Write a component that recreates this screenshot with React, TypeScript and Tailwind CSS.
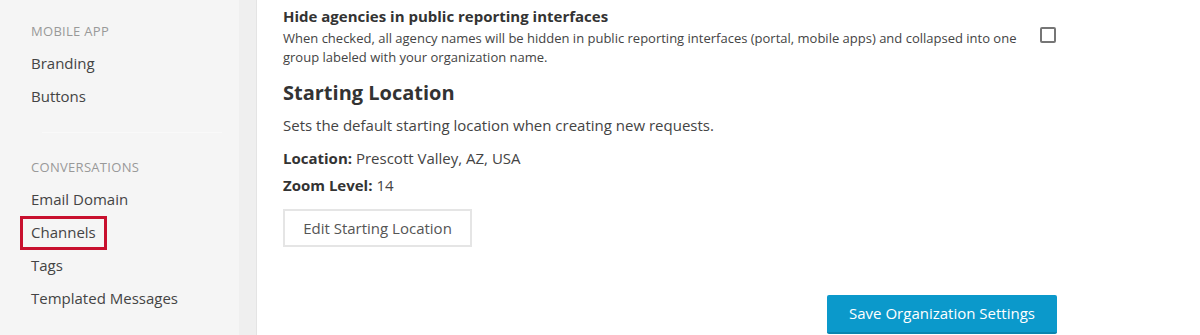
export default function App() {
  const font = { fontFamily: '"Open Sans", "Noto Sans", sans-serif' }

  return (
    <div className="flex h-[335px] w-[1200px] overflow-hidden bg-white text-[#444]" style={font}>
      <Sidebar />
      <div className="w-[18px] shrink-0 border-r border-[#e4e4e4] bg-[#efefef]" />
      <main className="flex-1 pl-[26px]">
        <div className="w-[774px]">
          <div className="flex items-start justify-between pt-[6px]">
            <div className="w-[740px]">
              <h3 className="text-[15px] font-bold leading-[20px] text-[#333]">
                Hide agencies in public reporting interfaces
              </h3>
              <p className="mt-[3px] text-[13px] leading-[19px] text-[#444]">
                When checked, all agency names will be hidden in public reporting interfaces (portal, mobile apps) and collapsed into one group labeled with your organization name.
              </p>
            </div>
            <span className="mr-px mt-[21px] block h-[16px] w-[16px] rounded-[2px] border-2 border-[#767676] bg-white" />
          </div>

          <h2 className="mt-[12px] text-[20px] font-bold leading-[28px] text-[#333]">Starting Location</h2>
          <p className="mt-[8px] text-[15px] leading-[20px]">Sets the default starting location when creating new requests.</p>
          <p className="mt-[13px] text-[15px] leading-[20px]">
            <span className="font-bold text-[#333]">Location:</span> Prescott Valley, AZ, USA
          </p>
          <p className="mt-[7px] text-[15px] leading-[20px]">
            <span className="font-bold text-[#333]">Zoom Level:</span> 14
          </p>
          <button className="mt-[14px] h-[38px] w-[189px] border-2 border-[#e5e5e5] bg-white text-[15px] text-[#555]">
            Edit Starting Location
          </button>

          <div className="mt-[48px] flex justify-end">
            <button className="h-[39px] w-[230px] rounded-[2px] border-b-2 border-[#0a85b0] bg-[#0b99cb] text-[15px] text-white">
              Save Organization Settings
            </button>
          </div>
        </div>
      </main>
    </div>
  )
}

function Sidebar() {
  const link = 'block h-[33px] text-[15px] leading-[33px] text-[#444]'
  const heading = 'block h-[31px] text-[13px] uppercase leading-[31px] tracking-[0.3px] text-[#999]'

  return (
    <aside className="w-[239px] shrink-0 bg-[#f5f5f5] pl-[31px] pt-[16px]">
      <span className={heading}>Mobile App</span>
      <span className={link}>Branding</span>
      <span className={link}>Buttons</span>
      <div className="mb-[19px] ml-[11px] mr-[17px] mt-[19px] h-px bg-[#f9f9f9]" />
      <span className={heading}>Conversations</span>
      <span className={link}>Email Domain</span>
      <span className="relative block h-[33px] text-[15px] leading-[33px] text-[#444]">
        Channels
        <span className="absolute left-[-11px] top-[0px] h-[34px] w-[87px] border-[3px] border-[#c8102e]" />
      </span>
      <span className={link}>Tags</span>
      <span className={link}>Templated Messages</span>
    </aside>
  )
}
